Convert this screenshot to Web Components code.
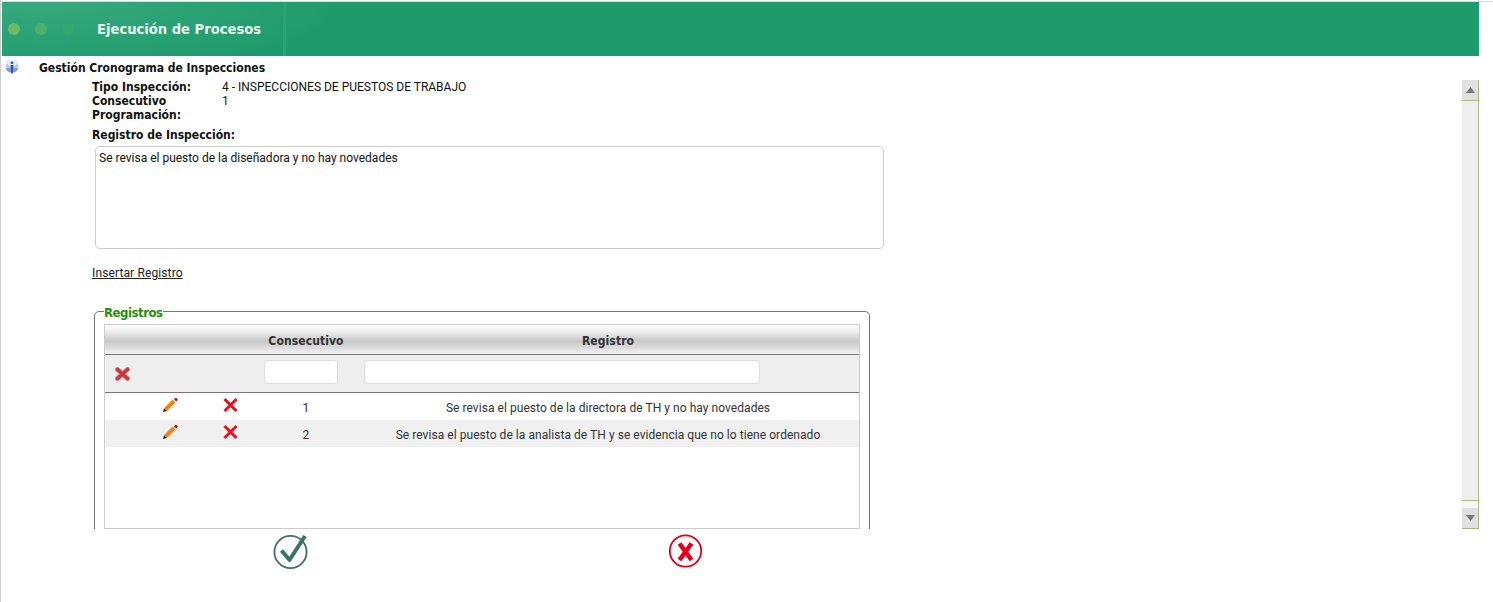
<!DOCTYPE html>
<html lang="es">
<head>
<meta charset="utf-8">
<title>Ejecución de Procesos</title>
<style>
  html, body { margin: 0; height: 100%; background: #fff; overflow: hidden; }
  body { font: 12px/14px Roboto, sans-serif; color: #111; }
</style>
</head>
<body>
<process-page>
  <title-bar>Ejecución de Procesos</title-bar>
  <section-head>Gestión Cronograma de Inspecciones</section-head>
  <scroll-pane>
    <inspection-info></inspection-info>
    <records-box></records-box>
  </scroll-pane>
  <action-buttons></action-buttons>
</process-page>

<script>
const BOLD = '"DejaVu Sans Condensed", "Liberation Sans", sans-serif'

class ProcessPage extends HTMLElement {
  constructor () {
    super()
    this.attachShadow({ mode: 'open' }).innerHTML = `
      <style>
        :host { display: block; height: 602px; box-sizing: border-box; padding-top: 2px;
                border-left: 1px solid #ccc; box-shadow: inset 0 1px 0 #fff, inset 0 2px 0 #ddd; }
      </style>
      <slot></slot>`
  }
}
customElements.define('process-page', ProcessPage)

class TitleBar extends HTMLElement {
  constructor () {
    super()
    this.attachShadow({ mode: 'open' }).innerHTML = `
      <style>
        :host { display: flex; align-items: center; box-sizing: border-box; width: 1477px; height: 54px; margin-left: 1px;
                background: radial-gradient(ellipse 300px 70px at 40px 0, #38a97f, #1e9b6d 100%), #1e9b6d; }
        .dots { display: flex; gap: 15px; margin-left: 6px; width: 89px; }
        .dots i { width: 12px; height: 12px; border-radius: 50%; }
        .dots i:nth-child(1) { background: #6fba66; }
        .dots i:nth-child(2) { background: #4fb06a; }
        .dots i:nth-child(3) { background: #34a66e; }
        h1 { margin: 0; width: 186px; font: bold 14.6px/18px ${BOLD}; color: #e9f6ef; }
        .sep { width: 3px; height: 54px; background: #2ba277; }
      </style>
      <div class="dots"><i></i><i></i><i></i></div>
      <h1><slot></slot></h1>
      <div class="sep"></div>`
  }
}
customElements.define('title-bar', TitleBar)

class SectionHead extends HTMLElement {
  constructor () {
    super()
    this.attachShadow({ mode: 'open' }).innerHTML = `
      <style>
        :host { display: flex; height: 24px; box-sizing: border-box; padding: 4px 0 0 4px; }
        svg { width: 14px; height: 15px; margin-right: 16px; }
        b { width: 1200px; margin: 1px 0 0 4px; font: bold 12px/14px ${BOLD}; color: #111; }
      </style>
      <svg viewBox="0 0 14 15">
        <circle cx="7" cy="6.5" r="6.4" fill="#bccbe9"/>
        <path d="M1 2.8A6.4 6.4 0 0 1 13 2.8L9 6.5H5Z" fill="#e4eaf6"/>
        <path d="M.8 8A6.4 6.4 0 0 0 5 12.6L4.8 8Z M13.2 8A6.4 6.4 0 0 1 9 12.6L9.2 8Z" fill="#8098ca"/>
        <path d="M5.6 5h2.8v6.5L7 14.5 5.6 11.5Z" fill="#2e55a6"/>
        <circle cx="7" cy="2.8" r="1.4" fill="#2e55a6"/>
      </svg>
      <b><slot></slot></b>`
  }
}
customElements.define('section-head', SectionHead)

class ScrollBar extends HTMLElement {
  constructor () {
    super()
    this.attachShadow({ mode: 'open' }).innerHTML = `
      <style>
        :host { display: flex; flex-direction: column; width: 17px; height: 449px; box-sizing: border-box; border-right: 1px solid #a9b98c; }
        .btn { display: flex; align-items: center; justify-content: center; height: 20px; background: #e0e0e0; border-bottom: 1px solid #a9b98c; }
        .track { height: 400px; background: #eee; border-bottom: 1px solid #a9b98c; }
        .gap { height: 7px; background: #f5f5f5; }
        svg { width: 9px; height: 6px; }
      </style>
      <div class="btn"><svg viewBox="0 0 9 6"><path d="M4.5 0L9 6H0z" fill="#777"/></svg></div>
      <div class="track"></div>
      <div class="gap"></div>
      <div class="btn"><svg viewBox="0 0 9 6"><path d="M0 0h9L4.5 6z" fill="#777"/></svg></div>`
  }
}
customElements.define('scroll-bar', ScrollBar)

class ScrollPane extends HTMLElement {
  constructor () {
    super()
    this.attachShadow({ mode: 'open' }).innerHTML = `
      <style>
        :host { display: flex; width: 1478px; height: 449px; }
        .body { flex: 1; overflow: hidden; padding-left: 91px; }
      </style>
      <div class="body"><slot></slot></div>
      <scroll-bar></scroll-bar>`
  }
}
customElements.define('scroll-pane', ScrollPane)

class InspectionInfo extends HTMLElement {
  constructor () {
    super()
    this.attachShadow({ mode: 'open' }).innerHTML = `
      <style>
        :host { display: block; }
        dl { display: grid; grid-template-columns: 130px 1fr; margin: 0; }
        dt, .lbl { font: bold 12px/14px ${BOLD}; color: #111; }
        dd { margin: 0; }
        .lbl { margin-top: 6px; }
        .note { width: 789px; height: 103px; margin: 4px 0 0 3px; padding: 4px 3px; box-sizing: border-box;
                border: 1px solid #ccc; border-radius: 5px; }
        a { display: inline-block; margin-top: 17px; color: #222; text-decoration: underline; letter-spacing: .12px; }
      </style>
      <dl>
        <dt>Tipo Inspección:</dt><dd>4 - INSPECCIONES DE PUESTOS DE TRABAJO</dd>
        <dt>Consecutivo</dt><dd>1</dd>
        <dt>Programación:</dt><dd></dd>
      </dl>
      <div class="lbl">Registro de Inspección:</div>
      <div class="note">Se revisa el puesto de la diseñadora y no hay novedades</div>
      <a href="#">Insertar Registro</a>`
  }
}
customElements.define('inspection-info', InspectionInfo)

class RecordsBox extends HTMLElement {
  constructor () {
    super()
    this.attachShadow({ mode: 'open' }).innerHTML = `
      <style>
        :host { display: block; margin-top: 24px; margin-left: 2px; width: 776px; }
        fieldset { margin: 0; padding: 5px 9px 20px; border: 1px solid #777; border-radius: 5px; min-width: 0; }
        legend { padding: 2px 0 0; font: bold 13px/13px ${BOLD}; letter-spacing: -.45px; color: #1f8f0c; }
      </style>
      <fieldset>
        <legend>Registros</legend>
        <records-grid>
          <record-row num="1">Se revisa el puesto de la directora de TH y no hay novedades</record-row>
          <record-row num="2" alt>Se revisa el puesto de la analista de TH y se evidencia que no lo tiene ordenado</record-row>
        </records-grid>
      </fieldset>`
  }
}
customElements.define('records-box', RecordsBox)

class RecordsGrid extends HTMLElement {
  constructor () {
    super()
    this.attachShadow({ mode: 'open' }).innerHTML = `
      <style>
        :host { display: block; width: 756px; height: 205px; box-sizing: border-box; border: 1px solid #ccc; --cols: 35px 60px 60px 92px 1fr; }
        .row { display: grid; grid-template-columns: var(--cols); align-items: center; }
        .head { height: 27px; padding-top: 2px; border-bottom: 1px solid #777; color: #333; text-align: center;
                font: bold 12px/14px ${BOLD}; letter-spacing: .1px;
                background: linear-gradient(#fdfdfd 0, #ececec 25%, #c8c8c8 55%, #d8d8d8 75%, #f4f4f4 100%); }
        .filter { height: 37px; background: #eee; border-bottom: 1px solid #777; }
        .reg { padding-left: 5px; }
        input { box-sizing: border-box; display: block; height: 24px; padding: 0; border: 1px solid #ddd; border-radius: 4px; background: #fff; }
        .box { align-self: start; margin-top: 5px; }
        .f1 { width: 74px; margin-left: 4px; }
        .f2 { width: 396px; margin-left: 7px; }
        svg { width: 15px; height: 14px; display: block; margin: 0 auto; }
      </style>
      <div class="row head">
        <span></span><span></span><span></span><span>Consecutivo</span><span class="reg">Registro</span>
      </div>
      <div class="row filter">
        <svg viewBox="0 0 15 14">
          <path d="M2.5 2.5L12.5 11.5M12.5 2.5L2.5 11.5" stroke="#d9a0a3" stroke-width="5.2" stroke-linecap="round"/>
          <path d="M2.5 2.5L12.5 11.5M12.5 2.5L2.5 11.5" stroke="#c23a42" stroke-width="3.6" stroke-linecap="round"/>
        </svg>
        <span></span><span></span>
        <div class="box"><input class="f1" aria-label="Consecutivo"></div>
        <div class="box reg"><input class="f2" aria-label="Registro"></div>
      </div>
      <slot></slot>`
  }
}
customElements.define('records-grid', RecordsGrid)

class RecordRow extends HTMLElement {
  constructor () {
    super()
    this.attachShadow({ mode: 'open' }).innerHTML = `
      <style>
        :host { display: grid; grid-template-columns: var(--cols); align-items: center; height: 27px; color: #333; text-align: center; letter-spacing: .05px; }
        :host([alt]) { background: #f0f0f0; }
        .txt { padding-top: 2px; }
        .reg { padding-left: 5px; }
        svg { width: 16px; height: 16px; display: block; margin: 0 auto 4px; }
      </style>
      <span></span>
      <svg viewBox="0 0 16 16">
        <path d="M3.2 12.8L12 4" stroke="#f57f0a" stroke-width="4"/>
        <path d="M1 15l1-3.6 2.6 2.6z" fill="#111"/>
        <path d="M12 2.2l1-1a1 1 0 0 1 1.6 0l.6.6a1 1 0 0 1 0 1.6l-1 1z" fill="#a80f1c"/>
      </svg>
      <svg viewBox="0 0 16 16">
        <path d="M2.5 2L14.5 14M14.5 2L2.5 14" stroke="#ec0f1f" stroke-width="3"/>
      </svg>
      <span class="txt"></span>
      <span class="reg txt"><slot></slot></span>`
    this.shadowRoot.querySelector('span.txt').textContent = this.getAttribute('num')
  }
}
customElements.define('record-row', RecordRow)

class ActionButtons extends HTMLElement {
  constructor () {
    super()
    this.attachShadow({ mode: 'open' }).innerHTML = `
      <style>
        :host { display: flex; padding: 4px 0 0 271px; gap: 360px; }
        svg { display: block; width: 37px; height: 37px; }
      </style>
      <svg viewBox="0 0 37 37">
        <circle cx="18.5" cy="19" r="16.1" fill="none" stroke="#3f7068" stroke-width="1.8"/>
        <path d="M9.5 17.5L17.5 27L33 3" fill="none" stroke="#3f7068" stroke-width="4" stroke-linejoin="round"/>
      </svg>
      <svg viewBox="0 0 37 37">
        <circle cx="16.5" cy="18" r="15.7" fill="none" stroke="#e2001a" stroke-width="1.8"/>
        <path d="M10.5 10.5L22.5 27M22.5 10.5L10.5 27" stroke="#e2001a" stroke-width="4.6"/>
      </svg>`
  }
}
customElements.define('action-buttons', ActionButtons)
</script>
</body>
</html>
